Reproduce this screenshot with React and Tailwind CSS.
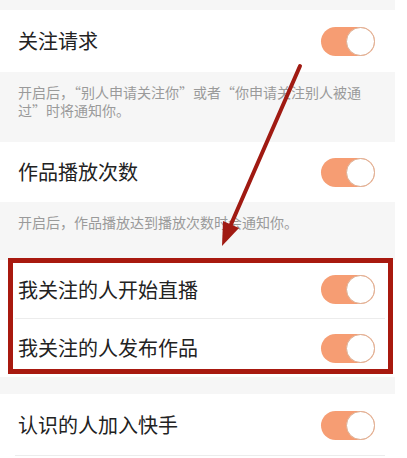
import { useState } from 'react'

const FONT = { fontFamily: '"Noto Sans CJK SC", "Noto Sans", sans-serif' }

function Toggle({ on, onClick }) {
  return (
    <button
      onClick={onClick}
      className={`relative w-[54px] h-[29px] rounded-full shrink-0 mr-[20px] ${on ? 'bg-[#f69d73]' : 'bg-[#e5e5e5]'}`}
    >
      <span
        className={`absolute top-0 w-[29px] h-[29px] rounded-full bg-white border-[1.5px] border-[#dcae92] ${on ? 'right-0' : 'left-0'}`}
      />
    </button>
  )
}

function Row({ label, on, onToggle, height, divider }) {
  return (
    <div className={`flex items-center justify-between bg-white ${height} relative`}>
      <span className="pl-[18px] text-[20px] text-[#222] leading-none">{label}</span>
      <Toggle on={on} onClick={onToggle} />
      {divider && <div className="absolute bottom-0 left-[15px] right-[10px] h-px bg-[#ececec]" />}
    </div>
  )
}

function Desc({ children, height }) {
  return (
    <div className={`bg-[#f6f6f6] ${height} pl-[18px] pr-[18px] pt-[11px] text-[14px] leading-[18px] text-[#9a9a9a]`}>
      {children}
    </div>
  )
}

export default function App() {
  const [toggles, setToggles] = useState([true, true, true, true, true])
  const flip = i => setToggles(t => t.map((v, j) => (j === i ? !v : v)))

  return (
    <div className="relative w-[407px] h-[458px] bg-white overflow-hidden" style={FONT}>
      <div className="w-[395px]">
        <div className="h-[10px] bg-[#f6f6f6]" />
        <Row label="关注请求" on={toggles[0]} onToggle={() => flip(0)} height="h-[62px]" />
        <Desc height="h-[70px]">
          开启后，“别人申请关注你”或者“你申请关注别人被通过”时将通知你。
        </Desc>
        <Row label="作品播放次数" on={toggles[1]} onToggle={() => flip(1)} height="h-[60px]" />
        <Desc height="h-[58px]">开启后，作品播放达到播放次数时会通知你。</Desc>
        <Row label="我关注的人开始直播" on={toggles[2]} onToggle={() => flip(2)} height="h-[59px]" divider />
        <Row label="我关注的人发布作品" on={toggles[3]} onToggle={() => flip(3)} height="h-[58px]" />
        <div className="h-[17px] bg-[#f6f6f6]" />
        <Row label="认识的人加入快手" on={toggles[4]} onToggle={() => flip(4)} height="h-[62px]" divider />
      </div>

      {/* annotation box */}
      <div className="absolute left-[8px] top-[258px] w-[385px] h-[116px] border-[5px] border-[#a8190f] pointer-events-none" />

      {/* annotation arrow */}
      <svg className="absolute inset-0 pointer-events-none" width="407" height="458" viewBox="0 0 407 458">
        <line x1="300" y1="66" x2="229" y2="229" stroke="#a01a12" strokeWidth="4" strokeLinecap="round" />
        <polygon points="222,246 239,228 223,221" fill="#a01a12" />
      </svg>
    </div>
  )
}
